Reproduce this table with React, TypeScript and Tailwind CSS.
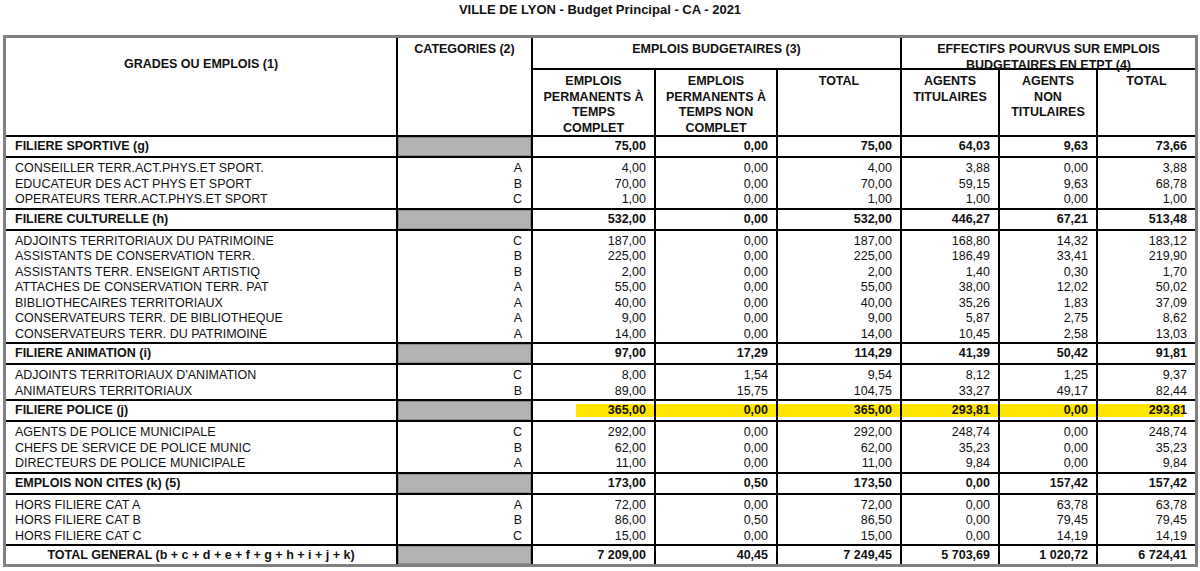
import React from "react";

type Line = { label: string; cat: string; values: string[] };
type Section = { title: string; totals: string[]; lines: Line[]; highlight?: boolean };

const sections: Section[] = [
  {
    title: "FILIERE SPORTIVE (g)",
    totals: ["75,00", "0,00", "75,00", "64,03", "9,63", "73,66"],
    lines: [
      { label: "CONSEILLER TERR.ACT.PHYS.ET SPORT.", cat: "A", values: ["4,00", "0,00", "4,00", "3,88", "0,00", "3,88"] },
      { label: "EDUCATEUR DES ACT PHYS ET SPORT", cat: "B", values: ["70,00", "0,00", "70,00", "59,15", "9,63", "68,78"] },
      { label: "OPERATEURS TERR.ACT.PHYS.ET SPORT", cat: "C", values: ["1,00", "0,00", "1,00", "1,00", "0,00", "1,00"] },
    ],
  },
  {
    title: "FILIERE CULTURELLE (h)",
    totals: ["532,00", "0,00", "532,00", "446,27", "67,21", "513,48"],
    lines: [
      { label: "ADJOINTS TERRITORIAUX DU PATRIMOINE", cat: "C", values: ["187,00", "0,00", "187,00", "168,80", "14,32", "183,12"] },
      { label: "ASSISTANTS DE CONSERVATION TERR.", cat: "B", values: ["225,00", "0,00", "225,00", "186,49", "33,41", "219,90"] },
      { label: "ASSISTANTS TERR. ENSEIGNT ARTISTIQ", cat: "B", values: ["2,00", "0,00", "2,00", "1,40", "0,30", "1,70"] },
      { label: "ATTACHES DE CONSERVATION TERR. PAT", cat: "A", values: ["55,00", "0,00", "55,00", "38,00", "12,02", "50,02"] },
      { label: "BIBLIOTHECAIRES TERRITORIAUX", cat: "A", values: ["40,00", "0,00", "40,00", "35,26", "1,83", "37,09"] },
      { label: "CONSERVATEURS TERR. DE BIBLIOTHEQUE", cat: "A", values: ["9,00", "0,00", "9,00", "5,87", "2,75", "8,62"] },
      { label: "CONSERVATEURS TERR. DU PATRIMOINE", cat: "A", values: ["14,00", "0,00", "14,00", "10,45", "2,58", "13,03"] },
    ],
  },
  {
    title: "FILIERE ANIMATION (i)",
    totals: ["97,00", "17,29", "114,29", "41,39", "50,42", "91,81"],
    lines: [
      { label: "ADJOINTS TERRITORIAUX D'ANIMATION", cat: "C", values: ["8,00", "1,54", "9,54", "8,12", "1,25", "9,37"] },
      { label: "ANIMATEURS TERRITORIAUX", cat: "B", values: ["89,00", "15,75", "104,75", "33,27", "49,17", "82,44"] },
    ],
  },
  {
    title: "FILIERE POLICE (j)",
    totals: ["365,00", "0,00", "365,00", "293,81", "0,00", "293,81"],
    highlight: true,
    lines: [
      { label: "AGENTS DE POLICE MUNICIPALE", cat: "C", values: ["292,00", "0,00", "292,00", "248,74", "0,00", "248,74"] },
      { label: "CHEFS DE SERVICE DE POLICE MUNIC", cat: "B", values: ["62,00", "0,00", "62,00", "35,23", "0,00", "35,23"] },
      { label: "DIRECTEURS DE POLICE MUNICIPALE", cat: "A", values: ["11,00", "0,00", "11,00", "9,84", "0,00", "9,84"] },
    ],
  },
  {
    title: "EMPLOIS NON CITES (k) (5)",
    totals: ["173,00", "0,50", "173,50", "0,00", "157,42", "157,42"],
    lines: [
      { label: "HORS FILIERE CAT A", cat: "A", values: ["72,00", "0,00", "72,00", "0,00", "63,78", "63,78"] },
      { label: "HORS FILIERE CAT B", cat: "B", values: ["86,00", "0,50", "86,50", "0,00", "79,45", "79,45"] },
      { label: "HORS FILIERE CAT C", cat: "C", values: ["15,00", "0,00", "15,00", "0,00", "14,19", "14,19"] },
    ],
  },
];

const grandTotal = ["7 209,00", "40,45", "7 249,45", "5 703,69", "1 020,72", "6 724,41"];

const cell = "border-r-2 border-b-2 border-black";
const lastCell = "border-b-2 border-black";
const gray = "p-0 bg-[#b3b3b3] shadow-[inset_0_0_0_1px_#8c8c8c]";

function TotalCells({ values, highlight }: { values: string[]; highlight?: boolean }) {
  return (
    <>
      {values.map((v, i) => {
        const last = i === values.length - 1;
        if (highlight) {
          return (
            <td key={i} className={`${last ? lastCell : cell} p-0 align-middle`}>
              <div
                className={`bg-[#ffe600] h-[13px] leading-[13px] text-right font-bold ${
                  i === 0 ? "ml-[43px] pr-[8px]" : last ? "mr-[11px]" : "pr-[8px]"
                }`}
              >
                <span className={last ? "inline-block -mr-[3px]" : ""}>{v}</span>
              </div>
            </td>
          );
        }
        return (
          <td key={i} className={`${last ? lastCell : cell} pr-[8px] text-right font-bold`}>
            {v}
          </td>
        );
      })}
    </>
  );
}

export default function App() {
  return (
    <div className="w-[1200px] h-[571px] bg-white text-[#111] font-['Liberation_Sans',Arial,sans-serif] text-[12.5px] overflow-hidden">
      <div className="h-[35px] pt-[3px] text-center font-bold text-[13px] leading-[14px]">
        VILLE DE LYON - Budget Principal - CA - 2021
      </div>
      <table className="ml-[3px] w-[1195px] table-fixed border-separate border-spacing-0 border-[3px] border-[#808080]">
        <colgroup>
          <col className="w-[392px]" />
          <col className="w-[135px]" />
          <col className="w-[123px]" />
          <col className="w-[122px]" />
          <col className="w-[124px]" />
          <col className="w-[98px]" />
          <col className="w-[98px]" />
          <col className="w-[97px]" />
        </colgroup>
        <thead className="font-bold">
          <tr className="h-[32px] leading-[15px]">
            <th rowSpan={2} className={`${cell} align-top pt-[19px] font-bold`}>
              GRADES OU EMPLOIS (1)
            </th>
            <th rowSpan={2} className={`${cell} align-top pt-[4px] font-bold`}>
              CATEGORIES (2)
            </th>
            <th colSpan={3} className={`${cell} align-top pt-[4px] font-bold`}>
              EMPLOIS BUDGETAIRES (3)
            </th>
            <th colSpan={3} className={`${lastCell} align-top pt-[4px] font-bold leading-[15.5px]`}>
              <div className="-mb-[9px]">
                EFFECTIFS POURVUS SUR EMPLOIS
                <br />
                BUDGETAIRES EN ETPT (4)
              </div>
            </th>
          </tr>
          <tr className="h-[67px] leading-[15.5px]">
            <th className={`${cell} align-top pt-[4px] font-bold`}>
              <div className="-mb-[4px]">
                EMPLOIS
                <br />
                PERMANENTS À
                <br />
                TEMPS
                <br />
                COMPLET
              </div>
            </th>
            <th className={`${cell} align-top pt-[4px] font-bold`}>
              <div className="-mb-[4px]">
                EMPLOIS
                <br />
                PERMANENTS À
                <br />
                TEMPS NON
                <br />
                COMPLET
              </div>
            </th>
            <th className={`${cell} align-top pt-[4px] font-bold`}>TOTAL</th>
            <th className={`${cell} align-top pt-[4px] font-bold`}>
              AGENTS
              <br />
              TITULAIRES
            </th>
            <th className={`${cell} align-top pt-[4px] font-bold`}>
              AGENTS
              <br />
              NON
              <br />
              TITULAIRES
            </th>
            <th className={`${lastCell} align-top pt-[4px] font-bold`}>TOTAL</th>
          </tr>
        </thead>
        <tbody>
          {sections.map((s) => (
            <React.Fragment key={s.title}>
              <tr className="h-[21px] leading-[15px]">
                <td className={`${cell} pl-[9px] font-bold`}>{s.title}</td>
                <td className={`${cell} ${gray}`} />
                <TotalCells values={s.totals} highlight={s.highlight} />
              </tr>
              <tr className="leading-[15.5px]">
                <td className={`${cell} pl-[9px] pt-[3px] align-top`}>
                  {s.lines.map((l) => (
                    <div key={l.label}>{l.label}</div>
                  ))}
                </td>
                <td className={`${cell} pr-[9px] pt-[3px] align-top text-right`}>
                  {s.lines.map((l) => (
                    <div key={l.label}>{l.cat}</div>
                  ))}
                </td>
                {[0, 1, 2, 3, 4, 5].map((c) => (
                  <td key={c} className={`${c === 5 ? lastCell : cell} pr-[8px] pt-[3px] align-top text-right`}>
                    {s.lines.map((l) => (
                      <div key={l.label}>{l.values[c]}</div>
                    ))}
                  </td>
                ))}
              </tr>
            </React.Fragment>
          ))}
          <tr className="h-[18px] leading-[15px]">
            <td className="border-r-2 border-black text-center font-bold">
              TOTAL GENERAL (b + c + d + e + f + g + h + i + j + k)
            </td>
            <td className={`border-r-2 border-black ${gray}`} />
            {grandTotal.map((v, i) => (
              <td
                key={i}
                className={`${i === grandTotal.length - 1 ? "" : "border-r-2 border-black"} pr-[8px] text-right font-bold`}
              >
                {v}
              </td>
            ))}
          </tr>
        </tbody>
      </table>
    </div>
  );
}
